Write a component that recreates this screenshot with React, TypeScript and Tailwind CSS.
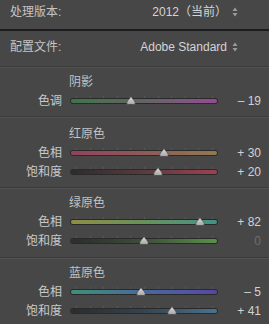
import React from "react";

type Slider = {
  label: string;
  value: number;
  track: string;
  dim?: boolean;
};

type Section = {
  title: string;
  pad: string;
  sliders: Slider[];
};

const sections: Section[] = [
  {
    title: "阴影",
    pad: "pt-[4px] pb-[6px]",
    sliders: [
      { label: "色调", value: -19, track: "bg-linear-to-r from-[#3e7449] via-[#636363] to-[#944a94]" },
    ],
  },
  {
    title: "红原色",
    pad: "pt-[6px] pb-[6px]",
    sliders: [
      { label: "色相", value: 30, track: "bg-linear-to-r from-[#94405e] via-[#8e5a58] to-[#927852]" },
      { label: "饱和度", value: 20, track: "bg-linear-to-r from-[#2c2c2c] via-[#5a3a40] to-[#9e4050]" },
    ],
  },
  {
    title: "绿原色",
    pad: "pt-[4px] pb-[7px]",
    sliders: [
      { label: "色相", value: 82, track: "bg-linear-to-r from-[#8e8e44] via-[#68905a] to-[#409486]" },
      { label: "饱和度", value: 0, track: "bg-linear-to-r from-[#2c2c2c] via-[#3e4e3a] to-[#5a9248]", dim: true },
    ],
  },
  {
    title: "蓝原色",
    pad: "pt-[4px] pb-[4px]",
    sliders: [
      { label: "色相", value: -5, track: "bg-linear-to-r from-[#3e9078] via-[#48689a] to-[#5646a6]" },
      { label: "饱和度", value: 41, track: "bg-linear-to-r from-[#2c2c2c] via-[#344450] to-[#4a7290]" },
    ],
  },
];

function UpDown() {
  return (
    <svg width="6" height="10" viewBox="0 0 6 10" className="ml-[5px]">
      <path d="M3 0.5 L5.5 4 L0.5 4 Z" fill="#9a9a9a" />
      <path d="M3 9.5 L5.5 6 L0.5 6 Z" fill="#9a9a9a" />
    </svg>
  );
}

function Thumb() {
  return (
    <svg width="10" height="9" viewBox="0 0 10 9">
      <defs>
        <linearGradient id="thumbFill" x1="0" y1="0" x2="0" y2="1">
          <stop offset="0" stopColor="#e0e0e0" />
          <stop offset="1" stopColor="#a4a4a4" />
        </linearGradient>
      </defs>
      <path
        d="M5 0.5 C5.8 2 8.4 4.6 9.2 6.2 Q9.8 8.5 7.6 8.5 L2.4 8.5 Q0.2 8.5 0.8 6.2 C1.6 4.6 4.2 2 5 0.5 Z"
        fill="url(#thumbFill)"
        stroke="#3a3a3a"
        strokeWidth="0.6"
      />
    </svg>
  );
}

const ticks = [0, 1, 2, 3, 4, 5, 6, 7, 8, 9, 10];

function SliderRow({ s }: { s: Slider }) {
  // thumb travels 76..212 on a 71..217 track
  const left = 5 + ((s.value + 100) / 200) * 136;
  const text =
    s.value === 0 ? "0" : s.value > 0 ? `+ ${s.value}` : `– ${Math.abs(s.value)}`;
  return (
    <div className="flex items-center h-[19px]">
      <div className="w-[62px] text-right text-[12px] text-[#c9c9c9]">{s.label}</div>
      <div className="relative ml-[9px] w-[146px] h-[19px]">
        {ticks.map((t) => (
          <div
            key={t}
            className="absolute top-[5px] w-px h-[2px] bg-[#575757]"
            style={{ left: 5 + t * 13.6 }}
          />
        ))}
        <div
          className={`absolute left-0 right-0 top-[8px] h-[4px] rounded-full shadow-[0_0_0_1px_#2a2a2a] ${s.track}`}
        />
        <div className="absolute top-[5px] -translate-x-1/2" style={{ left }}>
          <Thumb />
        </div>
      </div>
      <div
        className={`flex-1 text-right pr-[8px] text-[12px] ${s.dim ? "text-[#6e6e6e]" : "text-[#d2d2d2]"}`}
      >
        {text}
      </div>
    </div>
  );
}

export default function App() {
  return (
    <div className="w-[269px] h-[324px] overflow-hidden bg-[#474747] font-['Liberation_Sans','Noto_Sans_CJK_SC',sans-serif] select-none">
      <div className="flex items-center h-[29px] pb-[5px] pl-[10px] pr-[31px]">
        <span className="text-[12px] text-[#c4c4c4]">处理版本:</span>
        <span className="ml-auto text-[12px] text-[#d4d4d4]">2012（当前）</span>
        <UpDown />
      </div>
      <div className="h-[2px] bg-[#1c1c1c]" />
      <div className="flex items-center h-[35px] pb-[3px] pl-[10px] pr-[31px]">
        <span className="text-[12px] text-[#c4c4c4]">配置文件:</span>
        <span className="ml-auto text-[12px] text-[#d4d4d4]">Adobe Standard</span>
        <UpDown />
      </div>
      {sections.map((sec) => (
        <div key={sec.title}>
          <div className="h-px bg-[#3a3a3a]" />
          <div className="h-px bg-[#525252]" />
          <div className={sec.pad}>
            <div className="flex items-center h-[19px] pl-[69px] text-[12px] text-[#c2c2c2]">
              {sec.title}
            </div>
            {sec.sliders.map((s) => (
              <SliderRow key={s.label} s={s} />
            ))}
          </div>
        </div>
      ))}
    </div>
  );
}
